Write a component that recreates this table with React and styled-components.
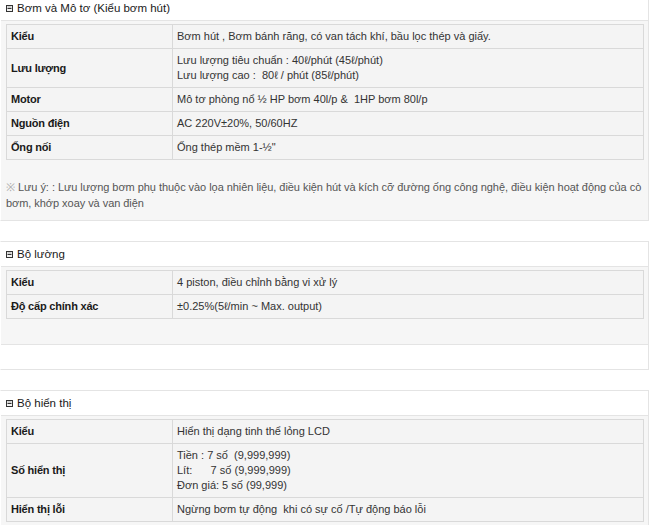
import React from "react";
import styled, { createGlobalStyle } from "styled-components";

const GlobalStyle = createGlobalStyle`
  html, body {
    margin: 0;
    padding: 0;
    background: #fff;
  }
  body {
    font-family: Arial, "Liberation Sans", sans-serif;
    font-size: 11px;
    color: #333;
    overflow: hidden;
  }
`;

const specs = [
  {
    title: "Bơm và Mô tơ (Kiểu bơm hút)",
    rows: [
      ["Kiểu", ["Bơm hút , Bơm bánh răng, có van tách khí, bầu lọc thép và giấy."]],
      ["Lưu lượng", ["Lưu lượng tiêu chuẩn : 40ℓ/phút (45ℓ/phút)", "Lưu lượng cao :  80ℓ / phút (85ℓ/phút)"]],
      ["Motor", ["Mô tơ phòng nổ ½ HP bơm 40l/p &  1HP bơm 80l/p"]],
      ["Nguồn điện", ["AC 220V±20%, 50/60HZ"]],
      ["Ống nối", ["Ống thép mềm 1-½\""]],
    ],
    note: "Lưu ý: : Lưu lượng bơm phụ thuộc vào lọa nhiên liệu, điều kiện hút và kích cỡ đường ống công nghệ, điều kiện hoạt động của cò bơm, khớp xoay và van điện",
  },
  {
    title: "Bộ lường",
    rows: [
      ["Kiểu", ["4 piston, điều chỉnh bằng vi xử lý"]],
      ["Độ cấp chính xác", ["±0.25%(5ℓ/min ~ Max. output)"]],
    ],
    note: "",
    footer: true,
  },
  {
    title: "Bộ hiển thị",
    rows: [
      ["Kiểu", ["Hiển thị dạng tinh thể lỏng LCD"]],
      ["Số hiển thị", ["Tiền : 7 số  (9,999,999)", "Lít:      7 số (9,999,999)", "Đơn giá: 5 số (99,999)"]],
      ["Hiển thị lỗi", ["Ngừng bơm tự động  khi có sự cố /Tự động báo lỗi"]],
    ],
  },
];

const Page = styled.div`
  margin-top: -5px;
  width: 649px;
`;

const Panel = styled.section`
  border: 1px solid #e4e4e4;
  border-left-color: transparent;
  margin-bottom: 20px;
  background: #fff;
`;

const Header = styled.h3`
  margin: 0;
  height: 24px;
  display: flex;
  align-items: center;
  gap: 4px;
  padding: 0 0 0 5px;
  font-size: 11.5px;
  font-weight: normal;
  color: #1a1a1a;
  border-bottom: 1px solid #e4e4e4;
`;

const Body = styled.div`
  background: #f6f6f6;
  padding: 3px 4px 9px 5px;
`;

const Footer = styled.div`
  height: 24px;
  border-top: 1px solid #e4e4e4;
`;

const Table = styled.table`
  width: 100%;
  border-collapse: collapse;
  background: #f4f4f4;
  border: 1px solid #d9d9d9;
`;

const Cell = styled.td`
  border: 1px solid #d9d9d9;
  padding: 4px;
  line-height: 15px;
  vertical-align: middle;
  text-align: left;
  font-size: 11px;
  width: ${(p) => (p.$label ? "157px" : "auto")};
  font-weight: ${(p) => (p.$label ? "bold" : "normal")};
  color: ${(p) => (p.$label ? "#1a1a1a" : "#333")};
  letter-spacing: ${(p) => (p.$label ? "-0.2px" : "0")};
`;

const Line = styled.div`
  white-space: pre;
`;

const Note = styled.p`
  margin: ${(p) => (p.$empty ? "0" : "19px -6px 0 0")};
  padding: 0;
  min-height: 16px;
  line-height: 16px;
  font-size: 11px;
  letter-spacing: -0.05px;
  color: #555;
`;

const Mark = styled.span`
  color: #aaa;
`;

const BoxIcon = () => (
  <svg width="7" height="7" viewBox="0 0 7 7">
    <rect x="0.5" y="0.5" width="6" height="6" fill="#f2f2f2" stroke="#333" />
    <line x1="1.5" y1="3.5" x2="5.5" y2="3.5" stroke="#333" />
    <line x1="1.5" y1="2" x2="5.5" y2="2" stroke="#aaa" />
  </svg>
);

const Section = ({ spec }) => (
  <Panel>
    <Header>
      <BoxIcon />
      {spec.title}
    </Header>
    <Body>
      <Table>
        <tbody>
          {spec.rows.map(([label, lines]) => (
            <tr key={label}>
              <Cell $label>{label}</Cell>
              <Cell>
                {lines.map((l, i) => (
                  <Line key={i}>{l}</Line>
                ))}
              </Cell>
            </tr>
          ))}
        </tbody>
      </Table>
      {spec.note !== undefined &&
        (spec.note ? (
          <Note>
            <Mark>※</Mark> {spec.note}
          </Note>
        ) : (
          <Note $empty />
        ))}
    </Body>
    {spec.footer && <Footer />}
  </Panel>
);

export default function App() {
  return (
    <>
      <GlobalStyle />
      <Page>
        {specs.map((s) => (
          <Section key={s.title} spec={s} />
        ))}
      </Page>
    </>
  );
}
